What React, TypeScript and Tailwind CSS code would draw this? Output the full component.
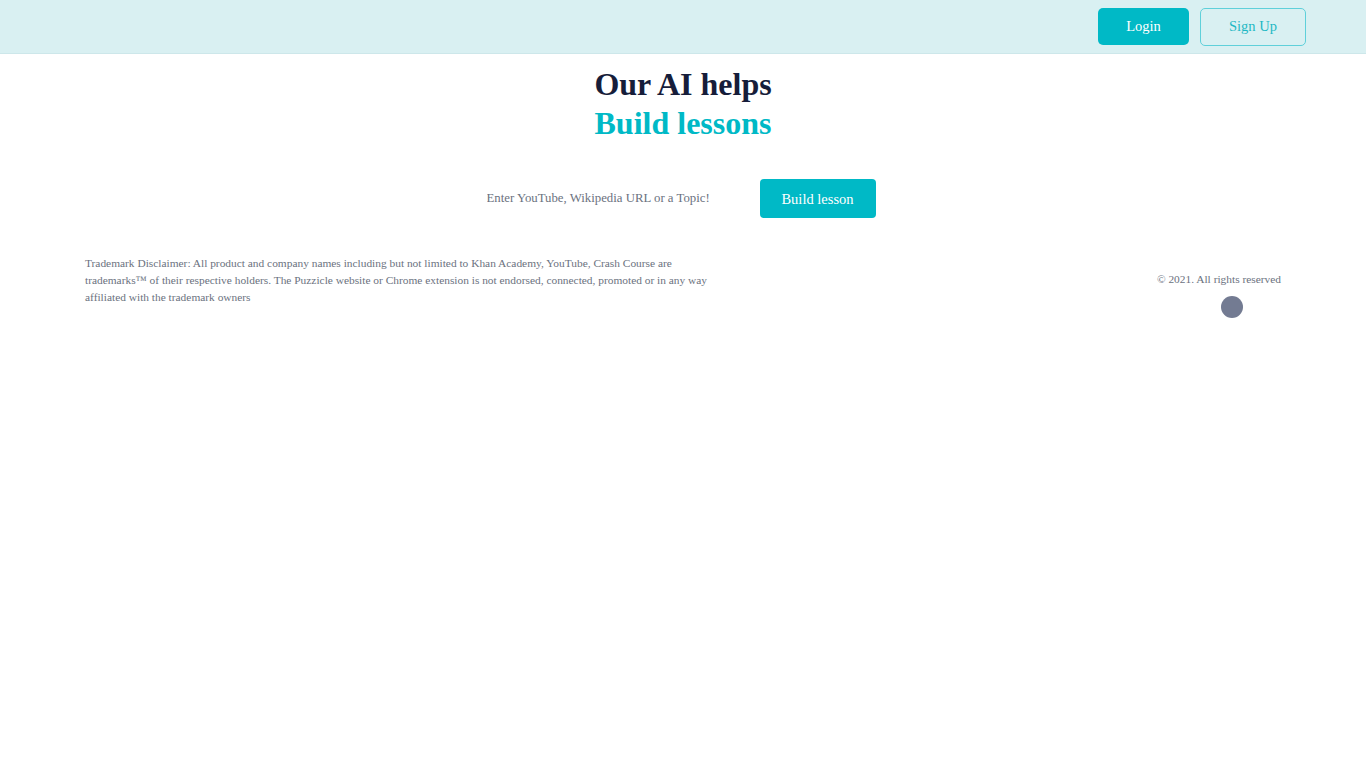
import React from "react";

const serif = { fontFamily: '"Liberation Serif", "Times New Roman", serif' };

export default function App() {
  return (
    <div className="min-h-screen bg-white" style={serif}>
      <header className="h-[54px] bg-[#d9f0f2] border-b border-[#cde7ea] flex items-center justify-end pr-[60px] gap-[11px]">
        <button className="w-[91px] h-[37px] rounded-[5px] bg-[#00b9c6] text-white text-[14.5px] pt-[1px]">
          Login
        </button>
        <button className="w-[106px] h-[38px] rounded-[5px] border border-[#5fd0da] text-[#1fb8c4] text-[14.5px] pt-[1px]">
          Sign Up
        </button>
      </header>

      <main className="flex flex-col items-center">
        <h1 className="mt-[11px] text-[32px] leading-[39px] font-bold text-[#161d3a] text-center">
          Our AI helps
          <br />
          <span className="text-[#00b9c6]">Build lessons</span>
        </h1>

        <div className="mt-[36px] flex items-center pr-[4px]">
          <input
            className="w-[273px] h-[39px] text-[12.8px] text-[#374151] placeholder-[#6b7280] outline-none bg-transparent"
            style={serif}
            placeholder="Enter YouTube, Wikipedia URL or a Topic!"
          />
          <button className="w-[116px] h-[39px] rounded-[4px] bg-[#00b9c6] text-white text-[14.5px] pt-[3px]">
            Build lesson
          </button>
        </div>
      </main>

      <footer className="mt-[37px] px-[85px] flex justify-between items-start">
        <p className="w-[630px] text-[11.4px] leading-[17px] text-[#6b7280]">
          Trademark Disclaimer: All product and company names including but not limited to Khan Academy, YouTube, Crash Course are trademarks™ of their respective holders. The Puzzicle website or Chrome extension is not endorsed, connected, promoted or in any way affiliated with the trademark owners
        </p>
        <div className="mt-[16px] flex flex-col items-center">
          <p className="text-[11.4px] leading-[17px] text-[#6b7280]">© 2021. All rights reserved</p>
          <div className="mt-[8px] ml-[26px] w-[22px] h-[22px] rounded-full bg-[#737b92]" />
        </div>
      </footer>
    </div>
  );
}
